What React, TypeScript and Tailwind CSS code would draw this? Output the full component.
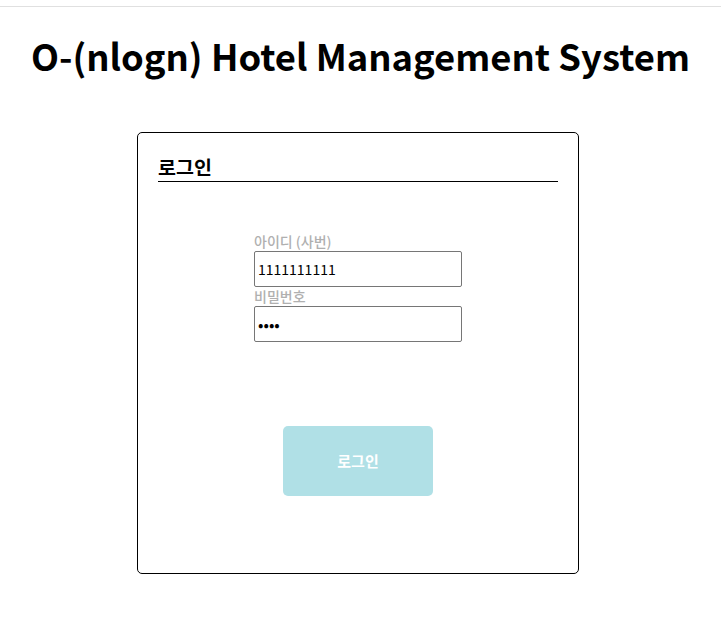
export default function App() {
  return (
    <div className="min-h-screen bg-white font-['Noto_Sans_CJK_KR','Noto_Sans',sans-serif] text-black">
      <div className="h-[6px]" />
      <div className="border-t border-[#e0e0e0]" />
      <h1 className="mt-[24px] text-center text-[36.4px] font-bold leading-[48px]">
        O-(nlogn) Hotel Management System
      </h1>
      <div className="mt-[53px] ml-[137px] w-[442px] h-[442px] rounded-[5px] border border-black px-[20px] pt-[19px]">
        <h2 className="text-[19.5px] font-bold leading-[29px] border-b border-black">로그인</h2>
        <div className="mt-[50px] flex flex-col items-center">
          <div className="flex flex-col w-[208px]">
            <label className="text-[14px] font-medium leading-[19px] text-[#b0b0b0]">아이디 (사번)</label>
            <input
              readOnly
              value="1111111111"
              className="h-[36px] border border-[#767676] rounded-[2px] px-[3px] text-[14px] outline-none"
            />
            <label className="text-[14px] font-medium leading-[19px] text-[#b0b0b0]">비밀번호</label>
            <input
              readOnly
              type="password"
              value="1111"
              className="h-[36px] border border-[#767676] rounded-[2px] px-[3px] text-[16px] outline-none"
            />
          </div>
          <button className="mt-[84px] w-[150px] h-[70px] rounded-[5px] bg-[#b0e0e6] text-white text-[15px] font-bold">
            로그인
          </button>
        </div>
      </div>
    </div>
  );
}
